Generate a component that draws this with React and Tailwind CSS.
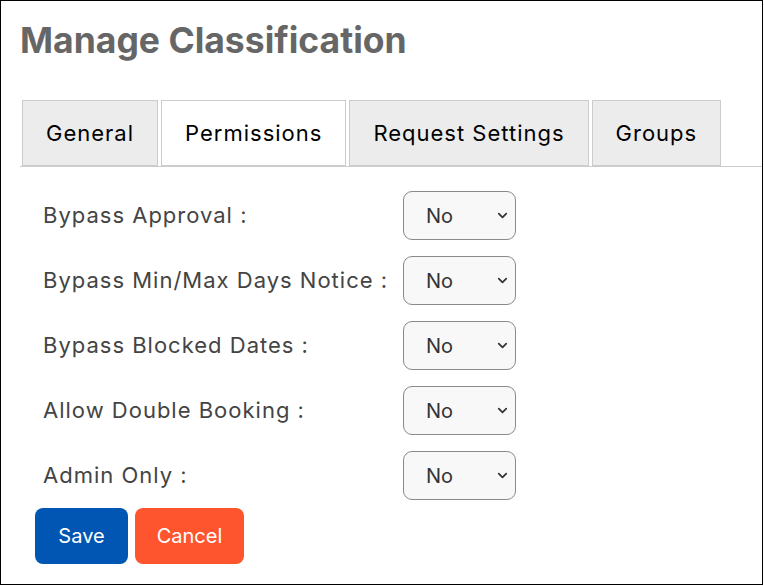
import React, { useState } from 'react';
import { ChevronDown } from 'lucide-react';

const tabs = ['General', 'Permissions', 'Request Settings', 'Groups'];

const fields = [
  'Bypass Approval :',
  'Bypass Min/Max Days Notice :',
  'Bypass Blocked Dates :',
  'Allow Double Booking :',
  'Admin Only :',
];

function YesNo() {
  const [value, setValue] = useState('No');
  return (
    <div className="relative w-[113px] h-[49px]">
      <select
        value={value}
        onChange={(e) => setValue(e.target.value)}
        className="appearance-none w-full h-full rounded-[9px] border border-[#8a8a8a] bg-[#f8f8f8] pl-[22px] text-[20px] text-[#333] outline-none"
      >
        <option>No</option>
        <option>Yes</option>
      </select>
      <ChevronDown
        className="pointer-events-none absolute right-[6px] top-[17px] h-[15px] w-[15px] text-[#333]"
        strokeWidth={2.75}
      />
    </div>
  );
}

export default function App() {
  const [active, setActive] = useState('Permissions');

  return (
    <div className="w-[764px] h-[586px] bg-white font-['Inter',sans-serif]">
      <div className="w-[763px] h-[585px] border border-black pl-[19px] pt-[20px]">
        <h1 className="text-[35.5px] font-bold text-[#666] leading-[40px]">Manage Classification</h1>

        <div className="mt-[39px] flex gap-[3px] border-b border-[#ccc] pl-[2px] h-[67px]">
          {tabs.map((t) => (
            <button
              key={t}
              onClick={() => setActive(t)}
              className={`h-[66px] border border-[#ccc] pl-[23px] pr-[23px] text-[22px] tracking-[1px] text-black ${
                active === t ? 'bg-white' : 'bg-[#ececec]'
              }`}
            >
              {t}
            </button>
          ))}
        </div>

        <div className="pl-[23px] pt-[24px] flex flex-col gap-[16px]">
          {fields.map((f) => (
            <div key={f} className="flex items-center">
              <label className="w-[360px] text-[22px] tracking-[1px] text-[#444]">{f}</label>
              <YesNo />
            </div>
          ))}
        </div>

        <div className="mt-[8px] pl-[15px] flex gap-[7px]">
          <button className="h-[56px] w-[93px] rounded-[8px] bg-[#0156b3] text-[20px] text-white">Save</button>
          <button className="h-[56px] w-[109px] rounded-[8px] bg-[#ff552f] text-[20px] text-white">Cancel</button>
        </div>
      </div>
    </div>
  );
}
